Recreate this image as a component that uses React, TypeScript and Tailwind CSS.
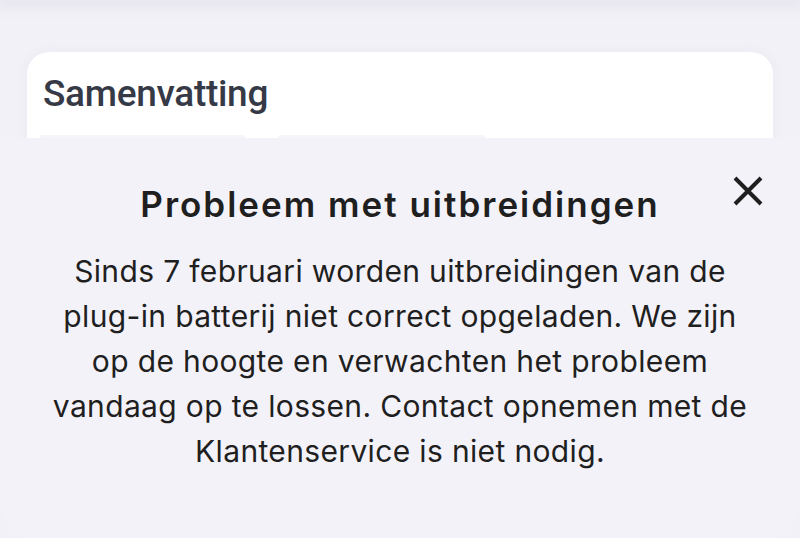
const lines = [
  'Sinds 7 februari worden uitbreidingen van de',
  'plug-in batterij niet correct opgeladen. We zijn',
  'op de hoogte en verwachten het probleem',
  'vandaag op te lossen. Contact opnemen met de',
  'Klantenservice is niet nodig.',
];

function SummaryCard() {
  return (
    <div className='mx-[27px] mt-[52px] flex h-[86px] flex-col rounded-t-[22px] bg-white pl-4 pt-[20px] shadow-[0_0_12px_rgba(120,110,170,0.06)]'>
      <h2 className="font-['Roboto',sans-serif] text-[37px] font-medium leading-[44px] tracking-[-0.3px] text-[#363a46]">
        Samenvatting
      </h2>
      <div className='mt-auto flex gap-[33px] pl-[-3px]'>
        <div className='-ml-[3px] h-[3px] w-[205px] rounded-t-[14px] bg-[#f6f5f9]' />
        <div className='h-[3px] w-[207px] rounded-t-[14px] bg-[#f6f5f9]' />
      </div>
    </div>
  );
}

function NoticeSheet() {
  return (
    <div className="flex h-[400px] flex-col items-center rounded-b-[34px] bg-[#f4f2f9] pt-[45px] font-['Inter',sans-serif] text-[#1f1f1f]">
      <div className='relative flex w-full justify-center'>
        <h1 className='text-[35px] font-semibold leading-[42px] tracking-[2px]'>
          Probleem met uitbreidingen
        </h1>
        <button className='absolute left-[733px] top-[-7px]'>
          <svg width='30' height='30' viewBox='0 0 30 30' fill='none' stroke='#1f1f1f' strokeWidth='4'>
            <path d='M2 2L28 28M28 2L2 28' />
          </svg>
        </button>
      </div>
      <div className='mt-[24px] text-center text-[30px] leading-[45px] tracking-[0.35px]'>
        {lines.map((line) => (
          <p key={line} className='whitespace-nowrap'>{line}</p>
        ))}
      </div>
    </div>
  );
}

export default function App() {
  return (
    <div className='h-[538px] w-[800px] overflow-hidden bg-[#f2f1f7]'>
      <div className='h-0 shadow-[0_0_14px_6px_rgba(200,198,215,0.35)]' />
      <SummaryCard />
      <NoticeSheet />
    </div>
  );
}
